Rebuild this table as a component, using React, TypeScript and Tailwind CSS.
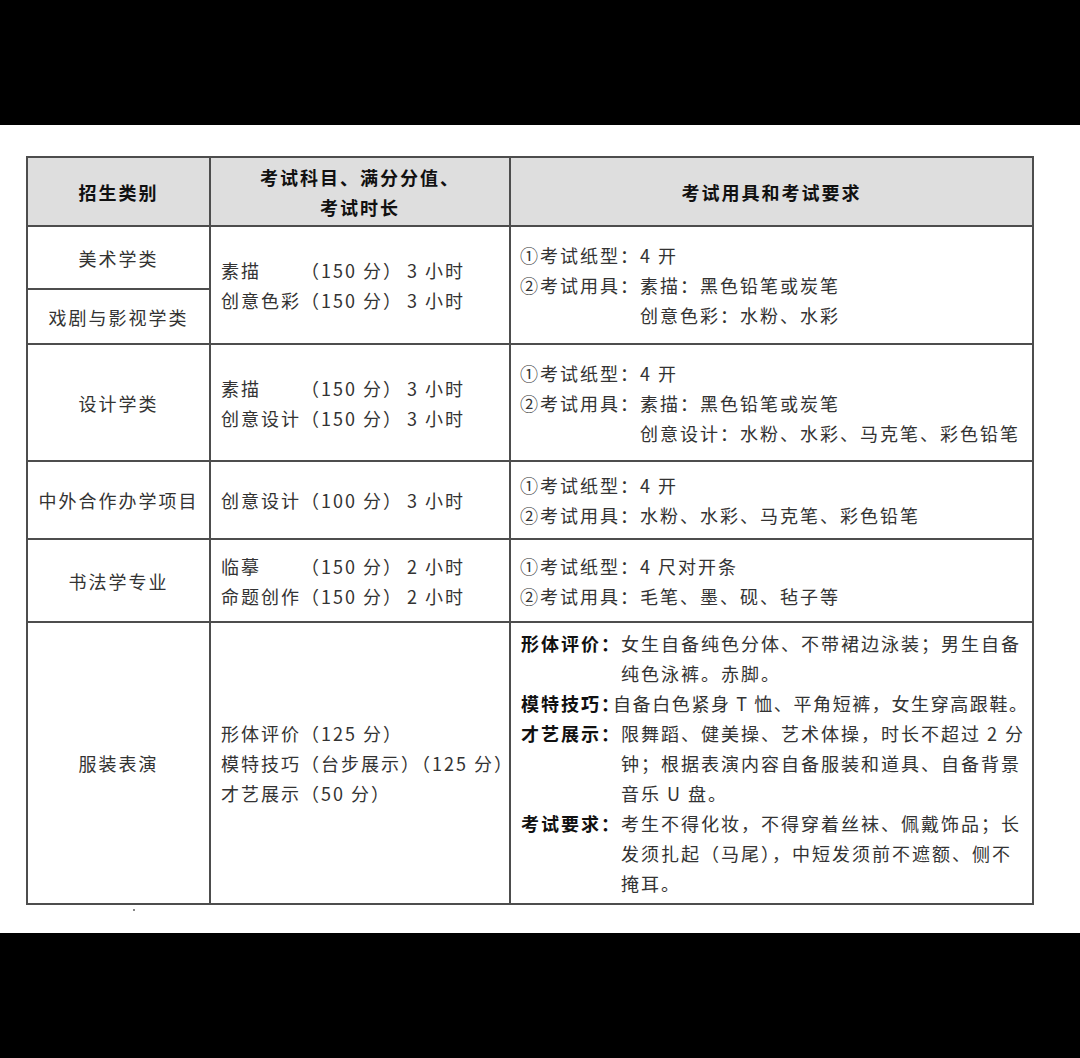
import React from 'react'

type Subj = { name: string; score: string; time: string }

function SubjectLine({ name, score, time }: Subj) {
    return (
        <div className="flex whitespace-nowrap">
            <span className="w-[80px]">{name}</span>
            <span>（{score} 分）</span>
            <span className="ml-[4px]">{time}</span>
        </div>
    )
}

function Req({ label, lines }: { label: string; lines: string[] }) {
    return (
        <>
            <span className="font-bold text-[#111]">{label}</span>
            <div>
                {lines.map((l) => (
                    <div key={l} className="whitespace-nowrap">{l}</div>
                ))}
            </div>
        </>
    )
}

export default function App() {
    const cell = 'bg-white flex items-center'
    const mid = 'bg-white flex items-center justify-center'

    return (
        <div className="w-[1080px] h-[1058px] bg-black flex flex-col font-['Noto_Sans_CJK_SC',sans-serif] text-[18px] leading-[30px] tracking-[2px] text-[#333]">
            {/* top bar */}
            <div className="h-[125px]" />

            <div className="h-[808px] bg-white pt-[31px] pl-[26px]">
                {/* table: grid gaps are the rules */}
                <div className="w-[1008px] grid grid-cols-[181px_298px_521px] grid-rows-[67px_61px_53px_115px_76px_81px_280px] gap-[2px] p-[2px] bg-[#4d4d4d]">
                    {/* header */}
                    <div className="bg-[#dedede] flex items-center justify-center font-bold text-[#111]">招生类别</div>
                    <div className="bg-[#dedede] flex flex-col items-center justify-center font-bold text-[#111]">
                        <span>考试科目、满分分值、</span>
                        <span>考试时长</span>
                    </div>
                    <div className="bg-[#dedede] flex items-center justify-center font-bold text-[#111]">考试用具和考试要求</div>

                    {/* 美术 / 戏剧 */}
                    <div className={mid}>美术学类</div>
                    <div className={`${cell} row-span-2 pl-[10px]`}>
                        <div>
                            <SubjectLine name="素描" score="150" time="3 小时" />
                            <SubjectLine name="创意色彩" score="150" time="3 小时" />
                        </div>
                    </div>
                    <div className={`${cell} row-span-2 pl-[9px]`}>
                        <div className="whitespace-nowrap">
                            <div>①考试纸型：4 开</div>
                            <div>②考试用具：素描：黑色铅笔或炭笔</div>
                            <div className="pl-[120px]">创意色彩：水粉、水彩</div>
                        </div>
                    </div>
                    <div className={mid}>戏剧与影视学类</div>

                    {/* 设计学类 */}
                    <div className={mid}>设计学类</div>
                    <div className={`${cell} pl-[10px]`}>
                        <div>
                            <SubjectLine name="素描" score="150" time="3 小时" />
                            <SubjectLine name="创意设计" score="150" time="3 小时" />
                        </div>
                    </div>
                    <div className={`${cell} pl-[9px]`}>
                        <div className="whitespace-nowrap">
                            <div>①考试纸型：4 开</div>
                            <div>②考试用具：素描：黑色铅笔或炭笔</div>
                            <div className="pl-[120px]">创意设计：水粉、水彩、马克笔、彩色铅笔</div>
                        </div>
                    </div>

                    {/* 中外合作 */}
                    <div className={mid}>中外合作办学项目</div>
                    <div className={`${cell} pl-[10px]`}>
                        <SubjectLine name="创意设计" score="100" time="3 小时" />
                    </div>
                    <div className={`${cell} pl-[9px]`}>
                        <div className="whitespace-nowrap">
                            <div>①考试纸型：4 开</div>
                            <div>②考试用具：水粉、水彩、马克笔、彩色铅笔</div>
                        </div>
                    </div>

                    {/* 书法 */}
                    <div className={mid}>书法学专业</div>
                    <div className={`${cell} pl-[10px]`}>
                        <div>
                            <SubjectLine name="临摹" score="150" time="2 小时" />
                            <SubjectLine name="命题创作" score="150" time="2 小时" />
                        </div>
                    </div>
                    <div className={`${cell} pl-[9px]`}>
                        <div className="whitespace-nowrap">
                            <div>①考试纸型：4 尺对开条</div>
                            <div>②考试用具：毛笔、墨、砚、毡子等</div>
                        </div>
                    </div>

                    {/* 服装表演 */}
                    <div className={mid}>服装表演</div>
                    <div className={`${cell} pl-[10px]`}>
                        <div className="whitespace-nowrap">
                            <div>形体评价（125 分）</div>
                            <div>模特技巧（台步展示）（125 分）</div>
                            <div>才艺展示（50 分）</div>
                        </div>
                    </div>
                    <div className={`${cell} pl-[10px]`}>
                        <div className="grid grid-cols-[100px_1fr]">
                            <Req label="形体评价：" lines={['女生自备纯色分体、不带裙边泳装；男生自备', '纯色泳裤。赤脚。']} />
                            <span className="font-bold text-[#111]">模特技巧：</span>
                            <div className="whitespace-nowrap -ml-[8px] tracking-[1.6px]">自备白色紧身 T 恤、平角短裤，女生穿高跟鞋。</div>
                            <Req label="才艺展示：" lines={['限舞蹈、健美操、艺术体操，时长不超过 2 分', '钟；根据表演内容自备服装和道具、自备背景', '音乐 U 盘。']} />
                            <Req label="考试要求：" lines={['考生不得化妆，不得穿着丝袜、佩戴饰品；长', '发须扎起（马尾），中短发须前不遮额、侧不', '掩耳。']} />
                        </div>
                    </div>
                </div>
                <div className="ml-[107px] mt-[4px] w-[2px] h-[2px] bg-[#888]" />
            </div>

            {/* bottom bar */}
            <div className="flex-1" />
        </div>
    )
}
